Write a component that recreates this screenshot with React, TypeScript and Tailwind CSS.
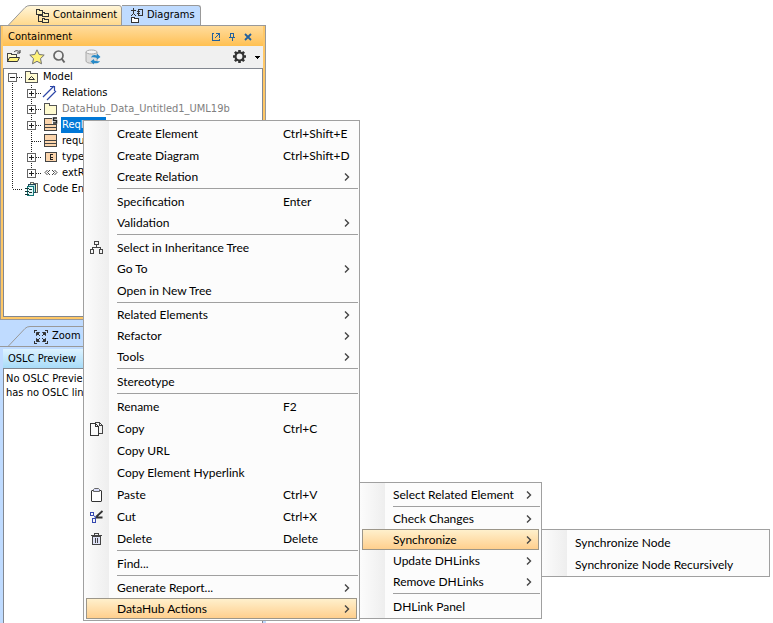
import type { ReactNode } from "react";

interface MenuEntry {
  label?: string;
  shortcut?: string;
  icon?: ReactNode;
  arrow?: boolean;
  active?: boolean;
  children?: MenuEntry[];
  childClass?: string;
}

const Svg = ({ w = 16, h = 16, children }: { w?: number; h?: number; children: ReactNode }) => (
  <svg width={w} height={h} viewBox={`0 0 ${w} ${h}`} fill="none" shapeRendering="crispEdges" aria-hidden="true" className="shrink-0">
    {children}
  </svg>
);

/* ---------- menu icons ---------- */

const HierarchyIcon = () => (
  <Svg>
    <path d="M5.5 1.5h4v3h-4zM1.5 9.5h3v4h-3zM10.5 9.5h3v4h-3zM7.5 4.5v3M3.5 9.5v-2h8v2" stroke="#444" />
    <path d="M6 10.5h3v3H6z" stroke="none" />
  </Svg>
);

const CopyIcon = () => (
  <Svg>
    <path d="M6.5 2V1.5h4l3 3v8H10M10.5 1.5v3h3" stroke="#444" />
    <path d="M1.5 2.5h5l3 3v9h-8zM6.5 2.5v3h3" fill="#fafafa" stroke="#333" />
  </Svg>
);

const PasteIcon = () => (
  <Svg>
    <path d="M2.5 3.5h10v11h-10z" fill="#fff" stroke="#333" />
    <path d="M2 3h1v1H2zM12 3h1v1h-1zM2 14h1v1H2zM12 14h1v1h-1z" fill="#999" />
    <path d="M4.500 4.500v-2l1-1h4l1 1v2z" fill="#d8dcf8" stroke="#666" shapeRendering="auto" />
  </Svg>
);

const CutIcon = () => (
  <Svg>
    <path d="M13.500 2L7 8M13.500 8.500H7" stroke="#333" strokeWidth="1.800" shapeRendering="auto" />
    <path d="M1.500 3.500h3v3h-3zM3.500 9.500h3v4h-3z" stroke="#3548b0" />
    <path d="M4.500 6.500L7 8.500M5.500 9.500L7 7.500" stroke="#3548b0" shapeRendering="auto" />
  </Svg>
);

const TrashIcon = () => (
  <Svg>
    <path d="M3.500 5.500h8v8h-8z" fill="#dfe2f7" stroke="#444" />
    <path d="M2 4.500h11M5.500 4V2.500h4V4M6.500 7v5M8.500 7v5" stroke="#444" />
  </Svg>
);

/* ---------- tree icons ---------- */

const FolderIcon = ({ model }: { model?: boolean }) => (
  <Svg>
    <path d="M2.500 4.500v-2h5v2h7v9h-12z" fill="#fffbd0" stroke="#555" />
    {model && <path d="M5.500 10.500h6l-3-3z" stroke="#333" shapeRendering="auto" />}
  </Svg>
);

const RelationIcon = () => (
  <Svg>
    <path d="M1 12L12 1M5 15L14 6M8 1.500h4.500V6" stroke="#2c46a8" strokeWidth="1.200" shapeRendering="auto" />
  </Svg>
);

const RequirementIcon = ({ s }: { s?: boolean }) => (
  <Svg>
    <path d="M2.500 1.500h12v6h-12zM2.500 7.500h12v3h-12zM2.500 10.500h12v3h-12z" fill="#fcd5ac" stroke="#444" />
    {s && (
      <>
        <path d="M10 0h6v7h-6z" fill="#fff" />
        <path d="M15 1h-3.500v2.500h3V6H11" stroke="#222" strokeWidth="1.500" shapeRendering="auto" />
      </>
    )}
  </Svg>
);

const EnumIcon = () => (
  <Svg>
    <path d="M3.500 3.500h11v9h-11z" fill="#fcd5ac" stroke="#444" />
    <path d="M11 5.500H8.500v5H11M8.500 8H11" stroke="#222" />
  </Svg>
);

const StereotypeIcon = () => (
  <Svg>
    <path d="M5.500 5L3 7.500 5.500 10M8 5L5.500 7.500 8 10M10 5l2.500 2.500L10 10M12.500 5L15 7.500 12.500 10" stroke="#444" shapeRendering="auto" />
  </Svg>
);

const CodeIcon = () => (
  <Svg>
    <path d="M7.500 2.500v-1h3v1h4v9h-2" fill="#fffbd0" stroke="#666" />
    <path d="M5.500 3.500h7v8h-7z" fill="#b9e4e4" stroke="#245" />
    <path d="M4.500 5.500h6v9h-6z" fill="#e6f7f7" stroke="#177" />
    <path d="M2 7.500h4M2 10.500h4M2 13.500h4M6 8.500h3M6 11.500h3" stroke="#133" />
  </Svg>
);

// dotted connector lines with the optional plus / minus box
const Connector = ({ box, up, down, elbow = true }: { box?: "plus" | "minus"; up?: boolean; down?: boolean; elbow?: boolean }) => (
  <Svg w={19} h={16}>
    <g stroke="#222" strokeDasharray="1 1">
      {up && <path d="M8.500 0v8" />}
      {down && <path d="M8.500 8v8" />}
      {elbow && <path d="M9 8.500h9" />}
    </g>
    {box && (
      <>
        <path d="M4.500 4.500h8v8h-8z" fill="#fff" stroke="#666" />
        <path d={box === "minus" ? "M6 8.500h5" : "M6 8.500h5M8.500 6v5"} stroke="#222" />
      </>
    )}
  </Svg>
);

/* ---------- panel icons ---------- */

const ContainmentTabIcon = () => (
  <Svg>
    <path d="M2.500 3.500v-2h3v1h3v4h-6zM8.500 6.500v-2h2v1h4v3h-6zM8.500 12.500v-2h2v1h4v3h-6z" fill="#fff0b8" stroke="#333" />
    <path d="M4.500 6.500v7h4M4.500 7.500h4" stroke="#333" />
  </Svg>
);

const DiagramsTabIcon = () => (
  <Svg>
    <path d="M4.500 0v6M2 2.500h5M4.500 5.500L2 8M4.500 5.500L7 8" stroke="#333" shapeRendering="auto" />
    <path d="M9.500 1.500h4v6h-4zM8 3.500h3M8 5.500h3" stroke="#333" />
    <path d="M2.500 10.500v-1h3v1h4v4h-7z" fill="#fff" stroke="#333" />
  </Svg>
);

const ZoomTabIcon = () => (
  <Svg>
    <path d="M1.500 4V1.500H4M12 1.500h2.500V4M14.500 12v2.500H12M4 14.500H1.500V12" stroke="#333" />
    <path d="M3.500 3.500h3l-3 3zM12.500 3.500v3l-3-3zM12.500 12.500h-3l3-3zM3.500 12.500v-3l3 3zM4 4l3 3M12 4L9 7M12 12L9 9M4 12l3-3" fill="#333" stroke="#333" shapeRendering="auto" />
  </Svg>
);

const OpenFolderIcon = () => (
  <Svg>
    <path d="M1.500 12.500v-8h4v1h5v3" fill="#fffbd0" stroke="#444" />
    <path d="M1.500 12.500l2-4h10l-2 4z" fill="#fff27a" stroke="#333" shapeRendering="auto" />
    <path d="M8 3c2-2 4-1.500 5.500 0M14 1v3h-3" stroke="#333" shapeRendering="auto" />
  </Svg>
);

const StarIcon = () => (
  <Svg>
    <path d="M8 .8l2.200 4.700 5 .6-3.700 3.500 1 5.200L8 12.300l-4.500 2.500 1-5.200L.8 6.100l5-.6z" fill="#fff27a" stroke="#707070" shapeRendering="auto" />
  </Svg>
);

const SearchIcon = () => (
  <Svg>
    <g shapeRendering="auto">
      <circle cx="7.500" cy="6.500" r="4.500" stroke="#666" strokeWidth="1.700" />
      <path d="M10.500 9.500l3 4" stroke="#666" strokeWidth="2" />
    </g>
  </Svg>
);

const SyncIcon = () => (
  <Svg>
    <g shapeRendering="auto">
      <path d="M1 3v9c0 3 11 3 11 0V3z" fill="#ddd" stroke="#aaa" />
      <ellipse cx="6.500" cy="3" rx="5.500" ry="2" fill="#f5f5f5" stroke="#aaa" />
      <path d="M6 8.500c1-3 4-3 6-2V4.500l3.500 3.500-3.500 2.500V9c-2-1-4-1-6-.5z" fill="#278ac8" />
      <path d="M15 12c-1 2.500-4 2.500-6 2v1.500L5.500 12.500 9 10v1.500c2 .8 4 .8 6 .5z" fill="#278ac8" />
    </g>
  </Svg>
);

const GearIcon = () => (
  <Svg>
    <g shapeRendering="auto" stroke="#333">
      <circle cx="7.500" cy="7.500" r="4" strokeWidth="2.200" />
      <path d="M7.500 1v2.500M7.500 11.500V14M1 7.500h2.500M11.500 7.500H14M2.900 2.900l1.800 1.800M10.300 10.300l1.800 1.800M12.100 2.900l-1.800 1.800M4.700 10.300l-1.800 1.800" strokeWidth="2.600" />
    </g>
  </Svg>
);

const mainMenu: MenuEntry[] = [
  { label: "Create Element", shortcut: "Ctrl+Shift+E" },
  { label: "Create Diagram", shortcut: "Ctrl+Shift+D" },
  { label: "Create Relation", arrow: true },
  {},
  { label: "Specification", shortcut: "Enter" },
  { label: "Validation", arrow: true },
  {},
  { label: "Select in Inheritance Tree", icon: <HierarchyIcon /> },
  { label: "Go To", arrow: true },
  { label: "Open in New Tree" },
  {},
  { label: "Related Elements", arrow: true },
  { label: "Refactor", arrow: true },
  { label: "Tools", arrow: true },
  {},
  { label: "Stereotype" },
  {},
  { label: "Rename", shortcut: "F2" },
  { label: "Copy", shortcut: "Ctrl+C", icon: <CopyIcon /> },
  { label: "Copy URL" },
  { label: "Copy Element Hyperlink" },
  { label: "Paste", shortcut: "Ctrl+V", icon: <PasteIcon /> },
  { label: "Cut", shortcut: "Ctrl+X", icon: <CutIcon /> },
  { label: "Delete", shortcut: "Delete", icon: <TrashIcon /> },
  {},
  { label: "Find..." },
  {},
  { label: "Generate Report...", arrow: true },
  {
    label: "DataHub Actions",
    arrow: true,
    active: true,
    childClass: "absolute left-full bottom-0 ml-[2px] w-[183px]",
    children: [
      { label: "Select Related Element", arrow: true },
      {},
      { label: "Check Changes", arrow: true },
      {
        label: "Synchronize",
        arrow: true,
        active: true,
        childClass: "absolute left-full top-0 ml-[2px] w-[229px]",
        children: [{ label: "Synchronize Node" }, { label: "Synchronize Node Recursively" }],
      },
      { label: "Update DHLinks", arrow: true },
      { label: "Remove DHLinks", arrow: true },
      {},
      { label: "DHLink Panel" },
    ],
  },
];

function Menu({ items, className }: { items: MenuEntry[]; className: string }) {
  return (
    <ul
      role="menu"
      className={`${className} border border-[#a0a0a0] bg-[#fcfcfc] bg-[linear-gradient(to_right,#fcfcfc,#eeeeee)] bg-[length:25px_100%] bg-no-repeat py-px px-[2px] font-[Lato,'Open_Sans',sans-serif] text-[12px] leading-5 text-black`}
    >
      {items.map((item, i) =>
        item.label ? (
          <li key={i} role="none" className="relative">
            <button
              type="button"
              role="menuitem"
              className={`flex w-full items-center border text-left whitespace-nowrap ${item.arrow ? "h-[21px]" : "h-[22px] pt-px"} ${
                item.active ? "border-[#9c9689] bg-linear-to-b from-[#fff0cc] to-[#ffcf8d]" : "border-transparent"
              }`}
            >
              <span className="flex w-[30px] shrink-0 items-center pl-[2px]">{item.icon}</span>
              <span className={item.shortcut ? "w-[166px]" : "flex-1"}>{item.label}</span>
              {item.shortcut && <span>{item.shortcut}</span>}
              {item.arrow && (
                <span className="pr-[5px]">
                  <svg width="8" height="8" viewBox="0 0 8 8" fill="none" aria-hidden="true">
                    <path d="M2 .5L5.500 4 2 7.500" stroke="#444" strokeWidth="1.400" />
                  </svg>
                </span>
              )}
            </button>
            {item.children && <Menu items={item.children} className={item.childClass ?? ""} />}
          </li>
        ) : (
          <li key={i} role="separator" className="-mr-px ml-[31px] py-px">
            <div className="h-px bg-[#a0a0a0]" />
          </li>
        )
      )}
    </ul>
  );
}

interface TreeRow {
  label: string;
  icon: ReactNode;
  root?: boolean;
  leaf?: boolean;
  tone?: string;
}

const tree: TreeRow[] = [
  { label: "Model", icon: <FolderIcon model />, root: true },
  { label: "Relations", icon: <RelationIcon /> },
  { label: "DataHub_Data_Untitled1_UML19b", icon: <FolderIcon />, tone: "text-[#808080]" },
  { label: "Reql", icon: <RequirementIcon s />, tone: "w-[45px] bg-[#0078d7] text-white" },
  { label: "requ", icon: <RequirementIcon />, leaf: true },
  { label: "type", icon: <EnumIcon /> },
  { label: "extR", icon: <StereotypeIcon /> },
  { label: "Code En", icon: <CodeIcon />, root: true, leaf: true },
];

function Tree() {
  return (
    <ul role="tree" className="text-[11px] leading-4">
      {tree.map((row, i) => (
        <li key={row.label} role="treeitem" className="flex h-4 items-center whitespace-nowrap">
          {row.root ? (
            <Connector box={row.leaf ? undefined : "minus"} up={i > 0} down={i === 0} />
          ) : (
            <>
              <Connector up down elbow={false} />
              <Connector box={row.leaf ? undefined : "plus"} up down={!tree[i + 1]?.root} />
            </>
          )}
          {row.icon}
          <span className={`ml-[3px] px-px ${row.tone ?? ""}`}>{row.label}</span>
        </li>
      ))}
    </ul>
  );
}

export default function App() {
  return (
    <div className="relative min-h-screen overflow-hidden bg-white font-['DejaVu_Sans_Condensed','Noto_Sans',sans-serif] text-[11px] text-black">
      <aside className="flex min-h-screen w-[266px] flex-col">
        <div className="mt-[5px] flex h-5 items-stretch" role="tablist">
          <button type="button" role="tab" aria-selected="true" className="relative flex w-[122px] items-center gap-[3px] pt-px pl-[34px]">
            <svg className="absolute inset-0 size-full" viewBox="0 0 122 20" aria-hidden="true">
              <defs>
                <linearGradient id="tab" x2="0" y2="1">
                  <stop stopColor="#fff6da" />
                  <stop offset="1" stopColor="#ffd88b" />
                </linearGradient>
              </defs>
              <path d="M8 20.500L25 2.500Q27 .5 30 .5H119Q121.500 .5 121.500 3V20.500" fill="url(#tab)" stroke="#999" />
            </svg>
            <span className="relative"><ContainmentTabIcon /></span>
            <span className="relative">Containment</span>
          </button>
          <button type="button" role="tab" aria-selected="false" className="flex w-[79px] items-center gap-[2px] rounded-tr-[3px] border border-b-0 border-l-0 border-[#999] bg-[#bfdbff] pl-[7px]">
            <DiagramsTabIcon />
            Diagrams
          </button>
        </div>
        <section className="flex h-[295px] flex-col border border-[#999] bg-[#ffc867] px-[2px] pb-[2px]">
          <h2 className="flex h-5 shrink-0 items-center bg-linear-to-b from-[#ffdc9c] to-[#ffc050] pt-[2px] pr-[9px] pl-[5px]">
            <span className="flex-1">Containment</span>
            <span className="flex gap-1">
              <button type="button" aria-label="Float">
                <Svg w={12} h={12}><path d="M4 2.500H2.500v7h7V8M5.500 2.500h4v4M9 3L5 7" stroke="#24619c" /></Svg>
              </button>
              <button type="button" aria-label="Pin">
                <Svg w={12} h={12}><path d="M4.500 2.500h3v4h-3zM3 6.500h6M6.500 7v3M7.500 2v5" stroke="#24619c" /></Svg>
              </button>
              <button type="button" aria-label="Close">
                <Svg w={12} h={12}><path d="M3 3l6 6M9 3l-6 6" stroke="#24619c" strokeWidth="1.800" shapeRendering="auto" /></Svg>
              </button>
            </span>
          </h2>
          <div className="flex h-[22px] shrink-0 items-center bg-[#f0f0f0] px-[3px]">
            <button type="button" aria-label="Open"><OpenFolderIcon /></button>
            <button type="button" aria-label="Favorites" className="ml-[7px]"><StarIcon /></button>
            <button type="button" aria-label="Search" className="ml-[6px]"><SearchIcon /></button>
            <button type="button" aria-label="Synchronize" className="ml-[18px]"><SyncIcon /></button>
            <button type="button" aria-label="Options" className="ml-auto flex items-center gap-[7px]">
              <GearIcon />
              <Svg w={5} h={3}><path d="M0 0h5L2.500 3z" fill="#000" /></Svg>
            </button>
          </div>
          <div className="flex-1 overflow-hidden border border-[#828790] bg-white">
            <Tree />
          </div>
        </section>
        <section className="flex flex-1 flex-col bg-[#bfdbff]">
          <div className="mt-[6px] flex h-5" role="tablist">
            <button type="button" role="tab" aria-selected="true" className="relative flex w-[122px] items-center gap-[3px] pt-px pl-[33px]">
              <svg className="absolute inset-0 size-full" viewBox="0 0 122 20" aria-hidden="true">
                <path d="M8 20.500L25 2.500Q27 .5 30 .5H119Q121.500 .5 121.500 3V20.500" fill="#bfdbff" stroke="#999" />
              </svg>
              <span className="relative"><ZoomTabIcon /></span>
              <span className="relative">Zoom</span>
            </button>
          </div>
          <div className="flex flex-1 flex-col border-t border-[#999] px-[3px] pt-[2px]">
            <h2 className="flex h-[19px] items-center bg-linear-to-b from-[#dcf2ff] to-[#a8dcf8] pt-px pl-[5px]">OSLC Preview</h2>
            <p className="flex-1 border border-b-0 border-[#828790] bg-white px-[2px] pt-[3px] leading-[14px] whitespace-nowrap">
              No OSLC Previe
              <br />
              has no OSLC lin
            </p>
          </div>
        </section>
      </aside>
      <Menu items={mainMenu} className="absolute top-[120px] left-[83px] w-[277px]" />
    </div>
  );
}
